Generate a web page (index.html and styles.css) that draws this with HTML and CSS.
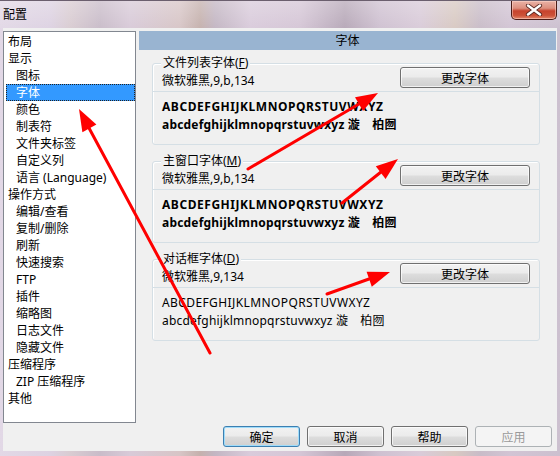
FILE: index.html
```html
<!DOCTYPE html>
<html lang="zh-CN">
<head>
<meta charset="utf-8">
<title>配置</title>
<link rel="stylesheet" href="styles.css">
</head>
<body>
<div class="window">
  <div class="titlebar">
    <span class="title">配置</span>
    <div class="close">
      <svg width="20" height="12" viewBox="0 0 20 12">
        <path d="M4 1.5 L16 10.5 M16 1.5 L4 10.5" stroke="#5a2a24" stroke-width="4.2" stroke-linecap="round"/>
        <path d="M4 1.5 L16 10.5 M16 1.5 L4 10.5" stroke="#ffffff" stroke-width="2.4" stroke-linecap="round"/>
      </svg>
    </div>
  </div>
  <div class="client">
    <ul class="tree">
      <li class="top">布局</li>
      <li class="top">显示</li>
      <li class="child">图标</li>
      <li class="child sel">字体</li>
      <li class="child">颜色</li>
      <li class="child">制表符</li>
      <li class="child">文件夹标签</li>
      <li class="child">自定义列</li>
      <li class="child">语言 (Language)</li>
      <li class="top">操作方式</li>
      <li class="child">编辑/查看</li>
      <li class="child">复制/删除</li>
      <li class="child">刷新</li>
      <li class="child">快速搜索</li>
      <li class="child">FTP</li>
      <li class="child">插件</li>
      <li class="child">缩略图</li>
      <li class="child">日志文件</li>
      <li class="child">隐藏文件</li>
      <li class="top">压缩程序</li>
      <li class="child">ZIP 压缩程序</li>
      <li class="top">其他</li>
    </ul>
    <div class="panel">
      <div class="panel-head">字体</div>
      <div class="group">
        <span class="legend">文件列表字体(<u>F</u>)</span>
        <div class="group-row"><span class="font-name">微软雅黑,9,b,134</span><button class="btn">更改字体</button></div>
        <div class="sample bold"><div class="caps">ABCDEFGHIJKLMNOPQRSTUVWXYZ</div><div class="lower">abcdefghijklmnopqrstuvwxyz 漩　柏囫</div></div>
      </div>
      <div class="group">
        <span class="legend">主窗口字体(<u>M</u>)</span>
        <div class="group-row"><span class="font-name">微软雅黑,9,b,134</span><button class="btn">更改字体</button></div>
        <div class="sample bold"><div class="caps">ABCDEFGHIJKLMNOPQRSTUVWXYZ</div><div class="lower">abcdefghijklmnopqrstuvwxyz 漩　柏囫</div></div>
      </div>
      <div class="group">
        <span class="legend">对话框字体(<u>D</u>)</span>
        <div class="group-row"><span class="font-name">微软雅黑,9,134</span><button class="btn">更改字体</button></div>
        <div class="sample"><div class="caps">ABCDEFGHIJKLMNOPQRSTUVWXYZ</div><div class="lower">abcdefghijklmnopqrstuvwxyz 漩　柏囫</div></div>
      </div>
    </div>
    <div class="actions">
      <button class="btn wide default">确定</button>
      <button class="btn wide">取消</button>
      <button class="btn wide">帮助</button>
      <button class="btn wide" disabled>应用</button>
    </div>
  </div>
  <svg class="annot" width="560" height="456" viewBox="0 0 560 456">
    <g stroke="#ff0000" stroke-width="3" stroke-linecap="round">
      <line x1="210" y1="352" x2="89" y2="127"/>
      <line x1="248" y1="168" x2="359" y2="103"/>
      <line x1="342" y1="202" x2="381" y2="171"/>
      <line x1="327" y1="293" x2="369" y2="278"/>
    </g>
    <g fill="#ff0000">
      <polygon points="79,108 96.4,123.6 82.4,131.2"/>
      <polygon points="378,92 363,110 355,96.2"/>
      <polygon points="398,158 385.6,177.9 375.8,165.3"/>
      <polygon points="390,271 371.8,285.8 366.6,270.7"/>
    </g>
  </svg>
</div>
</body>
</html>
```

FILE: styles.css
```css
html, body {
  margin: 0;
  padding: 0;
}

body {
  font-family: "Noto Sans", "Noto Sans CJK SC", sans-serif;
  font-size: 12px;
  color: #000;
}

.window {
  position: relative;
  width: 560px;
  height: 456px;
  box-sizing: border-box;
  display: flex;
  flex-direction: column;
  border-top: 1px solid #6b5f6e;
  background:
    linear-gradient(to bottom, rgba(255,255,255,0.25), rgba(255,255,255,0) 30px),
    linear-gradient(to right, #e2d8e6 0px, #ddd2e2 50px, #d9ccd2 70px, #c9bcc9 100px, #d8cad8 130px, #d7c5c6 180px, #c5b1ad 200px, #c3b6c3 215px, #d9cbdb 250px, #d5c6d6 300px, #b7a8b8 345px, #cfc1d1 380px, #d9cbd9 420px, #d8c9c2 455px, #c9bcc8 480px, #d2c4d4 510px, #ccc0cf 560px);
}

.titlebar {
  height: 27px;
  display: flex;
  justify-content: space-between;
  align-items: flex-start;
}

.title {
  margin: 6px 0 0 3px;
  line-height: 16px;
  font-size: 12px;
}

.close {
  width: 44px;
  height: 18px;
  margin-right: 3px;
  border: 1px solid #4a1c16;
  border-top: none;
  border-radius: 0 0 5px 5px;
  display: flex;
  align-items: center;
  justify-content: center;
  background: linear-gradient(to bottom, #eab2a6 0%, #dd8f7e 40%, #c7432d 55%, #cc5238 80%, #e4886c 100%);
  box-shadow: inset 0 0 0 1px rgba(255, 220, 210, 0.5);
}

.client {
  flex: 1;
  margin: 0 3px 5px 3px;
  background: #f0f0f0;
  display: grid;
  grid-template-columns: 133px 1fr;
  grid-template-rows: 1fr auto;
  column-gap: 3px;
  padding-top: 3px;
}

.tree {
  margin: 0;
  padding: 1px 0 0 2px;
  list-style: none;
  background: #ffffff;
  border: 1px solid #828790;
}

.tree li {
  height: 17px;
  line-height: 17px;
  white-space: nowrap;
}

.tree li.top {
  padding-left: 2px;
}

.tree li.child {
  padding-left: 10px;
}

.tree li.sel {
  background: #3399ff;
  color: #ffffff;
  outline: 1px dotted #222;
  outline-offset: -1px;
}

.panel {
  margin-right: 1px;
  display: flex;
  flex-direction: column;
}

.panel-head {
  height: 19px;
  line-height: 19px;
  text-align: center;
  background: #99b4d1;
}

.group {
  position: relative;
  margin: 13px 16px 0 13px;
  border: 1px solid #d5dfe5;
  border-radius: 3px;
  box-shadow: inset 1px 1px 0 #ffffff;
}

.group + .group {
  margin-top: 16px;
}

.legend {
  position: absolute;
  top: -9px;
  left: 8px;
  padding: 0 2px;
  line-height: 16px;
  background: #f0f0f0;
}

.group-row {
  height: 27px;
  display: flex;
  justify-content: space-between;
  align-items: flex-start;
  padding: 0 9px 0 9px;
  border-bottom: 1px solid #d5dfe5;
}

.font-name {
  margin-top: 9px;
  line-height: 16px;
}

.btn {
  width: 130px;
  height: 21px;
  margin-top: 3px;
  padding: 0;
  font-family: "Noto Sans", "Noto Sans CJK SC", sans-serif;
  font-size: 12px;
  color: #000;
  border: 1px solid #707070;
  border-radius: 3px;
  background: linear-gradient(to bottom, #f2f2f2 0%, #ebebeb 48%, #dddddd 52%, #cfcfcf 100%);
  box-shadow: inset 0 0 0 1px rgba(255, 255, 255, 0.7);
}

.btn.wide {
  width: 77px;
  margin-top: 0;
}

.btn.default {
  border-color: #3c7fb1;
  box-shadow: inset 0 0 0 1px #9fdcfa;
}

.btn:disabled {
  color: #9a9a9a;
  border-color: #adb2b5;
  background: #f4f4f4;
  box-shadow: none;
}

.sample {
  padding: 6px 9px 10px 9px;
  line-height: 18px;
  white-space: nowrap;
}

.sample.bold {
  font-weight: bold;
}

.sample .caps {
  letter-spacing: 0.4px;
}

.sample.bold .caps {
  letter-spacing: 0.55px;
}

.sample .lower {
  letter-spacing: 0.2px;
}

.actions {
  grid-column: 1 / -1;
  display: flex;
  justify-content: flex-end;
  gap: 7px;
  padding: 3px 5px 4px 0;
}

.annot {
  position: absolute;
  left: 0;
  top: 0;
  pointer-events: none;
}
```
